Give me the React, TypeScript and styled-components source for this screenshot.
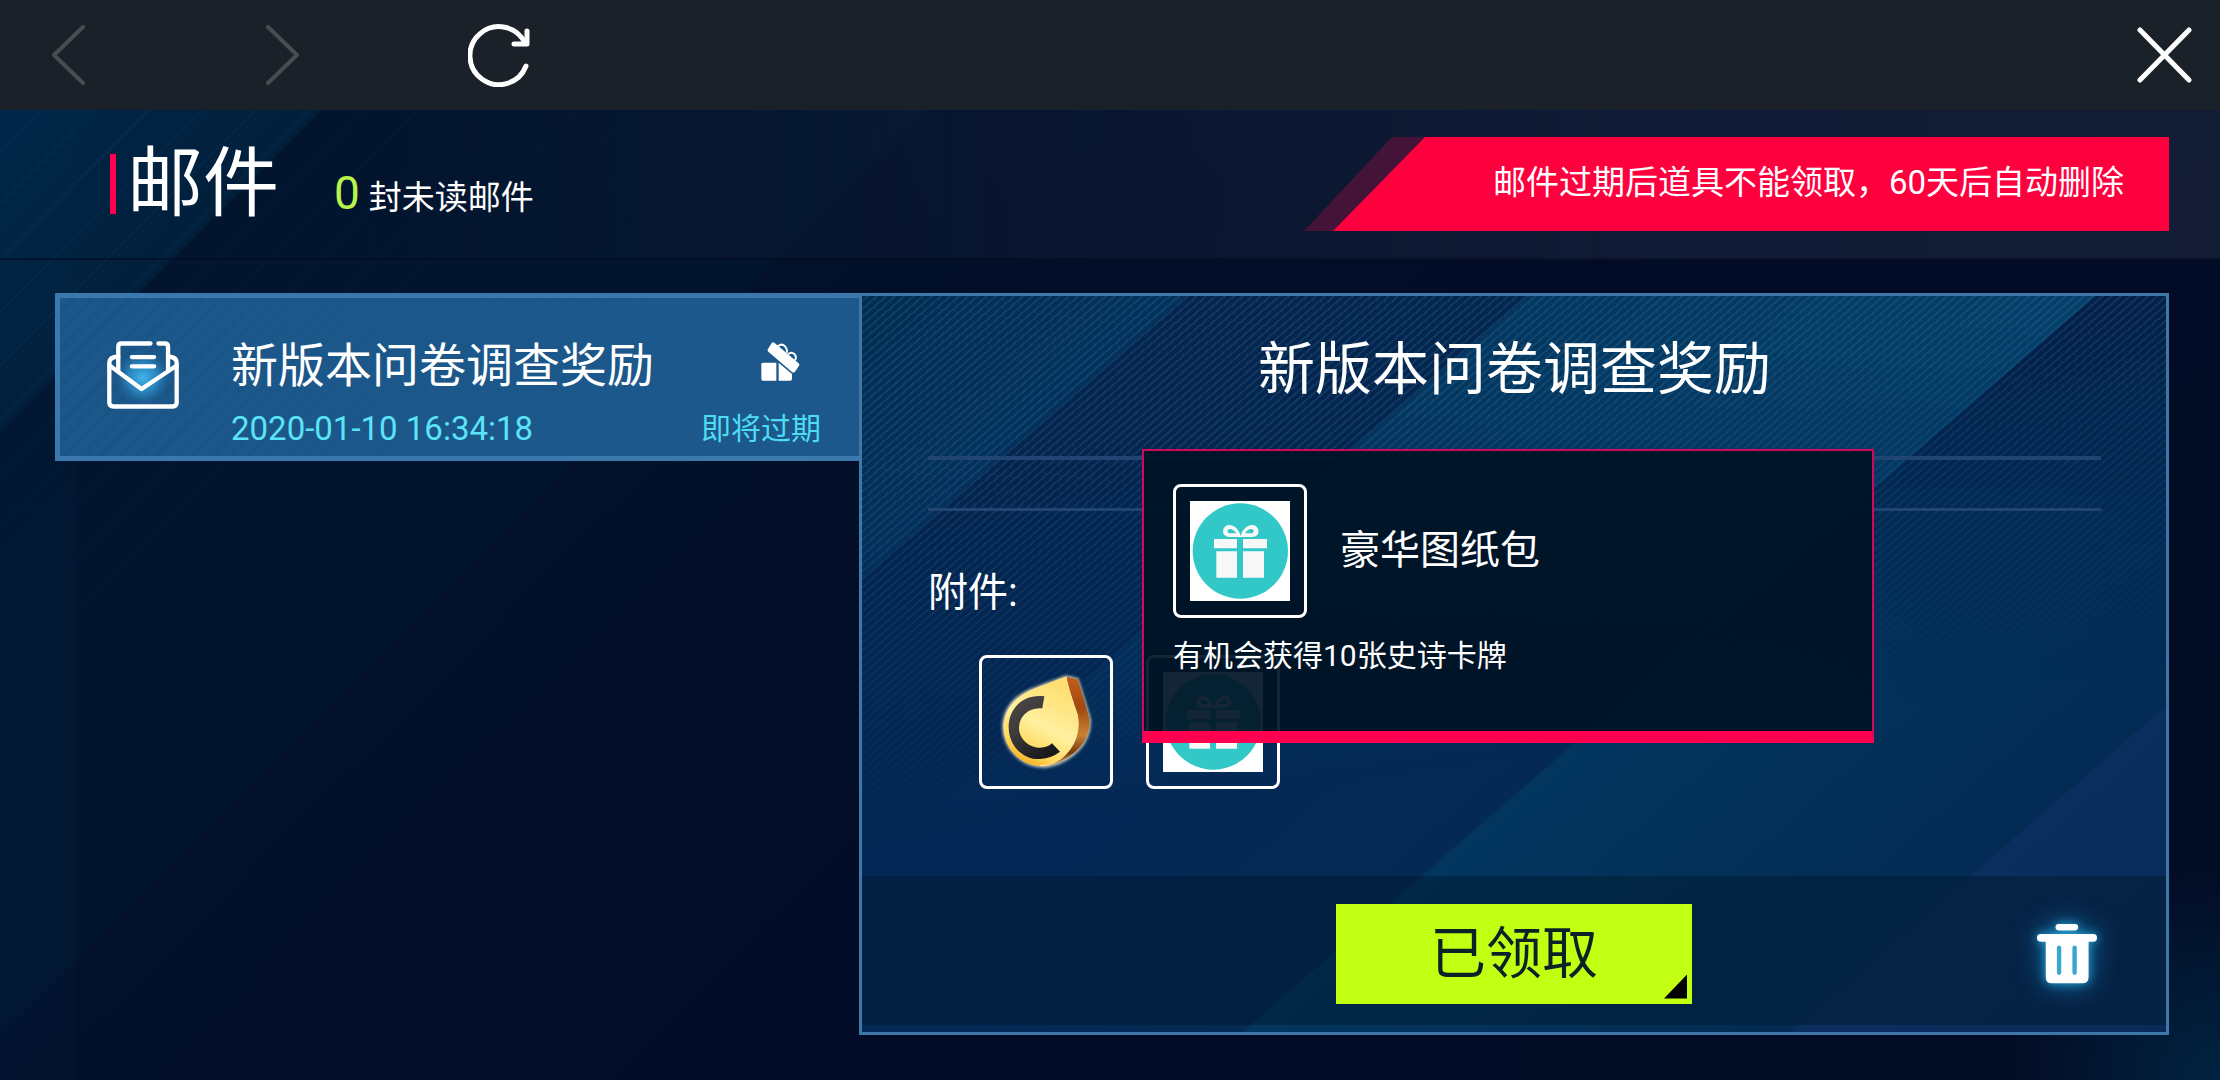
import React from 'react';
import styled, { createGlobalStyle } from 'styled-components';

const GlobalStyle = createGlobalStyle`
  *, *::before, *::after { box-sizing: border-box; }
  body {
    margin: 0;
    background: #020b24;
    color: #fff;
    font-family: Roboto, 'Noto Sans CJK SC', sans-serif;
  }
  h1, h2, h3, p, ul { margin: 0; padding: 0; font-weight: 400; }
  ul { list-style: none; }
  button {
    margin: 0;
    padding: 0;
    border: 0;
    background: none;
    color: inherit;
    font: inherit;
    cursor: pointer;
  }
  svg { display: block; }
`;

const Page = styled.div`
  position: relative;
  isolation: isolate;
  display: flex;
  flex-direction: column;
  min-height: 100vh;
  background:
    radial-gradient(circle at 100% 100%, rgba(0, 52, 84, 0.6), transparent 220px),
    linear-gradient(90deg, rgba(0, 40, 76, 0.15) 76px, transparent 76px),
    linear-gradient(135deg, #002a4e 0, #011f3b 304px, #02142e 306px, #02152e 732px, #02102a 734px, #020e28 1000px, #030c27 1300px, #020b24 100%);

  &::before {
    content: '';
    position: absolute;
    inset: 0;
    z-index: -1;
    background: repeating-linear-gradient(135deg, transparent 0 30px, rgba(40, 100, 140, 0.09) 30px 32px, transparent 32px 38px);
    mask-image: linear-gradient(135deg, #000 250px, transparent 640px);
  }
`;

const TopBar = styled.nav`
  display: flex;
  align-items: center;
  height: 110px;
  padding: 0 28px 0 51px;
  background: #1b2128;
`;

const NavButton = styled.button<{ $dim?: boolean; $gap?: number }>`
  margin-right: ${(p) => p.$gap ?? 0}px;
  color: ${(p) => (p.$dim ? '#484c54' : '#fff')};
`;

const CloseButton = styled(NavButton)`
  margin-left: auto;
`;

const Header = styled.header`
  display: flex;
  align-items: center;
  height: 150px;
  padding: 0 51px 0 110px;
  border-bottom: 2px solid rgba(0, 6, 24, 0.5);
  background: linear-gradient(90deg, transparent 15%, rgba(20, 32, 58, 0.75) 75%, rgba(24, 34, 58, 0.75));
`;

const PageTitle = styled.h1`
  display: flex;
  align-items: center;
  gap: 11px;
  font-size: 76px;
  line-height: 90px;

  &::before {
    content: '';
    width: 6px;
    height: 60px;
    background: #ff0050;
  }
`;

const Unread = styled.p`
  display: flex;
  align-items: baseline;
  gap: 9px;
  margin: 22px 0 0 55px;
  font-size: 33px;
  line-height: 50px;
`;

const UnreadCount = styled.strong`
  color: #b9f54a;
  font-size: 46px;
  font-weight: 400;
`;

const Notice = styled.div`
  display: grid;
  margin-left: auto;
  width: 865px;
  height: 94px;
  background: #431437;
  clip-path: polygon(88px 0, 100% 0, 100% 100%, 0 100%);
`;

const NoticeText = styled.p`
  margin-left: 29px;
  padding-right: 45px;
  background: #ff003f;
  clip-path: polygon(92px 0, 100% 0, 100% 100%, 0 100%);
  font-size: 33px;
  line-height: 92px;
  text-align: right;
  white-space: nowrap;
`;

const Main = styled.main`
  display: grid;
  flex: 1;
  grid-template-columns: 804fr 1310fr;
  padding: 33px 51px 45px 55px;
`;

const MailRow = styled.button`
  display: flex;
  align-items: flex-start;
  width: 100%;
  height: 168px;
  padding: 43px 38px 0 47px;
  border: 5px solid #3a78ae;
  border-right: 0;
  background:
    linear-gradient(90deg, transparent, #1c588b 75%),
    repeating-linear-gradient(135deg, #1c578a 0 8px, #1a5486 8px 13px);
  text-align: left;
`;

const MailSummary = styled.span`
  display: grid;
  flex: 1;
  grid-template-columns: 1fr auto;
  align-items: start;
  margin: -3px 0 0 52px;
`;

const MailTitle = styled.span`
  font-size: 47px;
  line-height: 56px;
`;

const MailDate = styled.time`
  color: #5be3f8;
  font-size: 33px;
  line-height: 70px;
`;

const MailFlag = styled.span`
  padding: 4px 21px 0 0;
  justify-self: end;
`;

const MailExpiry = styled.span`
  color: #4fdcf2;
  font-size: 30px;
  line-height: 70px;
`;

const Detail = styled.article`
  position: relative;
  display: flex;
  flex-direction: column;
  border: 3px solid #3d78a8;
  background: linear-gradient(139deg, #032a54 0, #042856 500px, #042a54 804px, #02365f 806px, #032b53 1164px, #0b2e5f 1166px, #0a2b59);
`;

const DetailShade = styled.div`
  position: absolute;
  inset: 0;
  background:
    repeating-linear-gradient(139deg, transparent 0 3px, rgba(90, 140, 190, 0.17) 3px 5px, transparent 5px 6px),
    linear-gradient(139deg, #022d52 0, #02325c 212px, #03254e 214px, #03264f 436px, #03375f 438px, #04406a 808px, #032049 810px, #03264f);
  mask-image: linear-gradient(172deg, #000 20%, transparent 60%);
`;

const DetailBody = styled.div`
  position: relative;
  flex: 1;
  padding: 34px 65px 0 66px;
`;

const DetailTitle = styled.h2`
  font-size: 57px;
  line-height: 80px;
  text-align: center;
`;

const Message = styled.div`
  height: 55px;
  margin-top: 46px;
  border-top: 4px solid #214473;
  border-bottom: 3px solid #214473;
`;

const AttachmentLabel = styled.h3`
  margin-top: 52px;
  font-size: 40px;
  line-height: 60px;
`;

const Attachments = styled.ul`
  display: flex;
  gap: 33px;
  padding: 32px 51px 0;
`;

const AttachmentItem = styled.li`
  position: relative;
`;

const itemFrame = `
  display: grid;
  place-items: center;
  width: 134px;
  height: 134px;
  border: 3px solid #fff;
  border-radius: 8px;
`;

const ItemButton = styled.button`
  ${itemFrame}
`;

const ItemFrame = styled.div`
  ${itemFrame}
`;

const Popup = styled.div`
  position: absolute;
  left: -4px;
  bottom: 46px;
  z-index: 1;
  width: 732px;
  padding: 33px 29px 55px;
  border: 2px solid #d2085a;
  border-bottom: 12px solid #ff0050;
  background: rgba(0, 18, 36, 0.92);
  background-clip: padding-box;
`;

const PopupHead = styled.div`
  display: flex;
  align-items: center;
  gap: 33px;
  font-size: 40px;
  line-height: 60px;
`;

const PopupText = styled.p`
  margin-top: 18px;
  font-size: 30px;
  line-height: 40px;
`;

const Footer = styled.footer`
  position: relative;
  display: grid;
  grid-template-columns: 1fr 356px 1fr;
  align-items: center;
  height: 149px;
  margin-bottom: 7px;
  padding: 6px 69px 0;
  background: rgba(0, 22, 38, 0.42);
`;

const ClaimButton = styled.button`
  grid-column: 2;
  position: relative;
  height: 100px;
  background: #c3ff12;
  color: #0c2226;
  font-size: 56px;
  line-height: 96px;

  &::after {
    content: '';
    position: absolute;
    right: 5px;
    bottom: 5px;
    width: 23px;
    height: 24px;
    background: #000;
    clip-path: polygon(100% 0, 100% 100%, 0 100%);
  }
`;

const DeleteButton = styled.button`
  justify-self: end;
  filter: drop-shadow(0 0 5px #2ba4d8) drop-shadow(0 0 12px rgba(20, 130, 190, 0.8));
`;

const Chevron = ({ right }: { right?: boolean }) => (
  <svg width="34" height="60" viewBox="0 0 34 60" fill="none" stroke="currentColor" strokeWidth="4" strokeLinecap="round" strokeLinejoin="round">
    <path d={right ? 'M2 2 31 30 2 58' : 'M32 2 3 30 32 58'} />
  </svg>
);

const RefreshIcon = () => (
  <svg width="62" height="64" viewBox="0 0 62 64" fill="none" stroke="currentColor" strokeWidth="5" strokeLinecap="round" strokeLinejoin="round">
    <path d="M58 43A29 29 0 1 1 57 20" />
    <path d="M59 8V21H46" />
  </svg>
);

const CloseIcon = () => (
  <svg width="55" height="56" viewBox="0 0 55 56" fill="none" stroke="currentColor" strokeWidth="5" strokeLinecap="round">
    <path d="M3 3 52 53M52 3 3 53" />
  </svg>
);

const EnvelopeIcon = () => (
  <svg width="72" height="68" viewBox="50 65 217 204" fill="none" stroke="#fff" strokeWidth="13" strokeLinecap="round" strokeLinejoin="round">
    <defs>
      <radialGradient id="envelopeGlow">
        <stop offset="0" stopColor="#40b4ea" />
        <stop offset="0.5" stopColor="#2c8fc8" stopOpacity="0.8" />
        <stop offset="1" stopColor="#1c588b" stopOpacity="0" />
      </radialGradient>
    </defs>
    <ellipse cx="158" cy="175" rx="90" ry="90" fill="url(#envelopeGlow)" stroke="none" />
    <path d="M181 72H94Q84 72 84 82V154M205 72H224Q234 72 234 82V154" />
    <path d="M84 112Q57 112 57 130V250Q57 262 70 262H248Q260 262 260 250V130Q260 112 234 112" />
    <path d="M60 140 154 209 258 140" />
    <path d="M125 113H192M125 141H192" />
  </svg>
);

const OpenGiftIcon = () => (
  <svg width="39" height="39" viewBox="209 64 117 117" fill="#fff">
    <path d="M215 126H255V180H215Q210 180 210 175V131Q210 126 215 126Z" />
    <path d="M262 126 302 160V174Q302 180 296 180H262Z" />
    <path d="M241 67Q245 63 250 67L321 127Q326 131 323 135L311 153Q307 158 302 154L231 93Q227 90 230 85Z" />
    <path d="M260 77Q271 67 281 77Q289 85 286 96M290 101Q300 92 309 100Q317 108 311 119" fill="none" stroke="#fff" strokeWidth="6" />
  </svg>
);

const TrashIcon = () => (
  <svg width="60" height="60" viewBox="80 97 178 178">
    <path d="M138 155H198V255H138Z" fill="#3aa5d0" />
    <rect x="135" y="97" width="67" height="19" rx="9" fill="#fff" />
    <path
      fill="#fff"
      fillRule="evenodd"
      d="M91 127H247Q258 127 258 138Q258 150 247 150H233V254Q233 273 214 273H124Q106 273 106 254V150H91Q80 150 80 138Q80 127 91 127ZM139 168V241Q139 248 145 248Q152 248 152 241V168Q152 161 145 161Q139 161 139 168ZM185 168V241Q185 248 192 248Q198 248 198 241V168Q198 161 192 161Q185 161 185 168Z"
    />
  </svg>
);

const GiftPicture = () => (
  <svg width="100" height="100" viewBox="90 93 300 300">
    <rect x="90" y="93" width="300" height="300" fill="#fff" />
    <circle cx="241" cy="243" r="143" fill="#33c8c8" />
    <path d="M162 207H231V235H162ZM249 207H321V235H249ZM169 244H231V323H169ZM249 244H312V323H249Z" fill="#f8f8f9" />
    <path
      fill="#f8f8f9"
      fillRule="evenodd"
      d="M242 198C237 178 222 164 205 165C190 167 184 186 194 196Q198 201 208 201H276Q287 201 291 196C301 186 294 167 279 165C262 164 247 178 242 198ZM229 190H211C201 190 200 178 209 177C218 177 224 182 229 190ZM255 190C260 182 266 177 275 177C284 178 283 190 273 190Z"
    />
  </svg>
);

const CoinPicture = () => (
  <svg width="100" height="100" viewBox="108 123 300 300" overflow="visible">
    <defs>
      <linearGradient id="coinFace" x1="0.7" y1="0.1" x2="0.3" y2="1">
        <stop offset="0" stopColor="#ffdf72" />
        <stop offset="0.5" stopColor="#fff0a0" />
        <stop offset="0.8" stopColor="#ffd95c" />
        <stop offset="1" stopColor="#f7ad1c" />
      </linearGradient>
      <linearGradient id="coinSide" x1="0" y1="0" x2="0" y2="1">
        <stop offset="0" stopColor="#c2601c" />
        <stop offset="0.35" stopColor="#a04810" />
        <stop offset="0.65" stopColor="#c98232" />
        <stop offset="0.85" stopColor="#7a3c0c" />
        <stop offset="1" stopColor="#f0b040" />
      </linearGradient>
      <linearGradient id="coinLetter" x1="0" y1="0" x2="0.6" y2="1">
        <stop offset="0" stopColor="#4c4845" />
        <stop offset="0.5" stopColor="#3c3a3c" />
        <stop offset="1" stopColor="#18191c" />
      </linearGradient>
      <filter id="coinGlow" x="-20%" y="-20%" width="140%" height="140%">
        <feGaussianBlur stdDeviation="5" />
      </filter>
    </defs>
    <path d="M318 137 352 145 388 262C396 330 340 392 260 406C185 412 130 350 130 284C134 225 175 190 225 172Z" fill="#fff4d8" stroke="#fff4d8" strokeWidth="7" opacity="0.8" filter="url(#coinGlow)" />
    <path d="M318 137 352 145Q356 150 388 262C396 330 340 385 262 405L230 405 330 290Z" fill="url(#coinSide)" />
    <path d="M318 137C322 165 340 215 352 252C368 330 310 404 240 404C180 404 130 350 130 284C134 225 175 192 225 172Q285 148 318 137Z" fill="url(#coinFace)" />
    <path d="M318 137C322 165 340 215 352 252C368 330 310 404 240 404" fill="none" stroke="#ffe9a0" strokeWidth="3" />
    <path d="M253 196C190 188 146 232 146 288C146 350 196 388 240 384Q276 381 300 362L276 337Q262 350 240 350C205 350 177 322 177 290C178 255 206 228 247 232Z" fill="url(#coinLetter)" />
  </svg>
);

export default function App() {
  return (
    <Page>
      <GlobalStyle />
      <TopBar>
        <NavButton $dim $gap={181} aria-label="后退"><Chevron /></NavButton>
        <NavButton $dim $gap={168} aria-label="前进"><Chevron right /></NavButton>
        <NavButton aria-label="刷新"><RefreshIcon /></NavButton>
        <CloseButton aria-label="关闭"><CloseIcon /></CloseButton>
      </TopBar>
      <Header>
        <PageTitle>邮件</PageTitle>
        <Unread><UnreadCount>0</UnreadCount>封未读邮件</Unread>
        <Notice><NoticeText>邮件过期后道具不能领取，60天后自动删除</NoticeText></Notice>
      </Header>
      <Main>
        <ul>
          <li>
            <MailRow>
              <EnvelopeIcon />
              <MailSummary>
                <MailTitle>新版本问卷调查奖励</MailTitle>
                <MailFlag><OpenGiftIcon /></MailFlag>
                <MailDate dateTime="2020-01-10T16:34:18">2020-01-10 16:34:18</MailDate>
                <MailExpiry>即将过期</MailExpiry>
              </MailSummary>
            </MailRow>
          </li>
        </ul>
        <Detail>
          <DetailShade />
          <DetailBody>
            <DetailTitle>新版本问卷调查奖励</DetailTitle>
            <Message />
            <AttachmentLabel>附件:</AttachmentLabel>
            <Attachments>
              <AttachmentItem>
                <ItemButton aria-label="金币"><CoinPicture /></ItemButton>
              </AttachmentItem>
              <AttachmentItem>
                <ItemButton aria-label="豪华图纸包"><GiftPicture /></ItemButton>
                <Popup role="tooltip">
                  <PopupHead>
                    <ItemFrame><GiftPicture /></ItemFrame>
                    豪华图纸包
                  </PopupHead>
                  <PopupText>有机会获得10张史诗卡牌</PopupText>
                </Popup>
              </AttachmentItem>
            </Attachments>
          </DetailBody>
          <Footer>
            <ClaimButton>已领取</ClaimButton>
            <DeleteButton aria-label="删除"><TrashIcon /></DeleteButton>
          </Footer>
        </Detail>
      </Main>
    </Page>
  );
}
